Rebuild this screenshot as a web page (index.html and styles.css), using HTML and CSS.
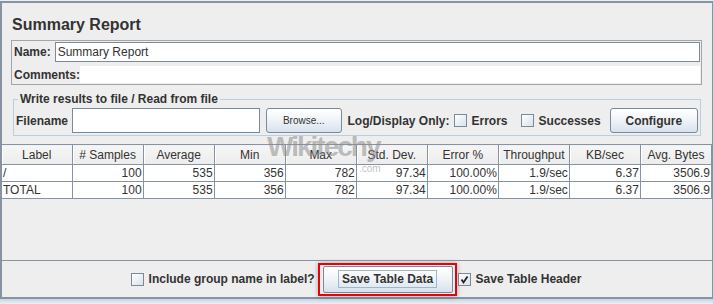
FILE: index.html
```html
<!DOCTYPE html>
<html lang="en">
<head>
    <meta charset="UTF-8">
    <meta name="viewport" content="width=device-width, initial-scale=1.0">
    <title>Summary Report</title>
    <link rel="stylesheet" href="styles.css">
</head>

<body>
    <div class="frame">
        <h1 class="title">Summary Report</h1>

        <div class="namebox">
            <div class="name-row">
                <label for="name">Name:</label>
                <input type="text" id="name" class="field" value="Summary Report">
            </div>
            <div class="comment-row">
                <label for="comments">Comments:</label>
                <div class="comment-field" id="comments"></div>
            </div>
        </div>

        <fieldset class="filebox">
            <legend>Write results to file / Read from file</legend>
            <div class="file-row">
                <label for="filename">Filename</label>
                <input type="text" id="filename" class="field filename">
                <button class="btn browse">Browse...</button>
                <span class="log-label">Log/Display Only:</span>
                <span class="check"></span>
                <span class="check-label">Errors</span>
                <span class="check second"></span>
                <span class="check-label">Successes</span>
                <button class="btn configure">Configure</button>
            </div>
        </fieldset>

        <div class="results">
            <table>
                <colgroup>
                    <col class="c-first">
                    <col><col><col><col><col><col><col><col><col>
                </colgroup>
                <thead>
                    <tr>
                        <th>Label</th>
                        <th># Samples</th>
                        <th>Average</th>
                        <th>Min</th>
                        <th>Max</th>
                        <th>Std. Dev.</th>
                        <th>Error %</th>
                        <th>Throughput</th>
                        <th>KB/sec</th>
                        <th>Avg. Bytes</th>
                    </tr>
                </thead>
                <tbody>
                    <tr>
                        <td class="lbl">/</td>
                        <td>100</td>
                        <td>535</td>
                        <td>356</td>
                        <td>782</td>
                        <td>97.34</td>
                        <td>100.00%</td>
                        <td>1.9/sec</td>
                        <td>6.37</td>
                        <td>3506.9</td>
                    </tr>
                    <tr>
                        <td class="lbl">TOTAL</td>
                        <td>100</td>
                        <td>535</td>
                        <td>356</td>
                        <td>782</td>
                        <td>97.34</td>
                        <td>100.00%</td>
                        <td>1.9/sec</td>
                        <td>6.37</td>
                        <td>3506.9</td>
                    </tr>
                </tbody>
            </table>
            <!-- site watermark over the grid -->
            <span class="watermark">Wikitechy<small>.com</small></span>
        </div>

        <div class="save-row">
            <span class="check"></span>
            <span class="check-label">Include group name in label?</span>
            <div class="highlight">
                <button class="btn save"><span class="focus">Save Table Data</span></button>
            </div>
            <span class="check checked">
                <svg width="11" height="11" viewBox="0 0 11 11"><path d="M2.5 5.5 L4.5 8.5 L8.5 2.5" fill="none" stroke="#222" stroke-width="1.8"/></svg>
            </span>
            <span class="check-label">Save Table Header</span>
        </div>
    </div>
    <div class="taskbar"></div>
</body>
</html>
```

FILE: styles.css
```css
* {
  box-sizing: border-box;
}

body {
  margin: 0;
  width: 713px;
  height: 304px;
  overflow: hidden;
  background-color: #eeeeee;
  font-family: "Liberation Sans", Arial, sans-serif;
  font-size: 12px;
  color: #333333;
}

.frame {
  margin-top: 1px;
  height: 298px;
  border: 2px solid #8593a2;
  border-right-width: 1px;
  display: flex;
  flex-direction: column;
  background-color: #eeeeee;
}

.title {
  margin: 0;
  padding: 12px 0 0 10px;
  font-size: 16px;
  line-height: 19px;
  font-weight: bold;
}

/* name / comments block */
.namebox {
  margin: 6px 10px 0 9px;
  border: 1px solid #a5a5a5;
  padding: 1px 1px 1px 2px;
}

.name-row,
.comment-row {
  display: flex;
  align-items: center;
}

.name-row {
  height: 20px;
}

.comment-row {
  height: 17px;
  margin-top: 4px;
}

label,
.log-label,
.check-label {
  font-weight: bold;
  white-space: nowrap;
}

.name-row label {
  margin-right: 4px;
}

.field {
  flex: 1;
  height: 20px;
  border: 1px solid #7b8a99;
  padding: 0 2px;
  margin: 0;
  font-family: inherit;
  font-size: 12px;
  color: #333333;
  background: #ffffff;
  outline: none;
}

.comment-field {
  flex: 1;
  height: 17px;
  background: #ffffff;
}

/* file box */
.filebox {
  margin: 7px 11px 0 11px;
  border: 1px solid #b8cfe5;
  padding: 0 2px 2px 2px;
  min-width: 0;
}

.filebox legend {
  margin-left: 2px;
  padding: 0 2px;
  font-weight: bold;
  line-height: 14px;
}

.file-row {
  margin-top: 2px;
  height: 25px;
  display: flex;
  align-items: center;
}

.file-row label {
  margin-right: 4px;
}

.filename {
  flex: none;
  width: 188px;
  height: 25px;
}

.btn {
  height: 25px;
  margin: 0;
  border: 1px solid #7b8a99;
  border-radius: 3px;
  background: linear-gradient(#ffffff, #f3f6f9 40%, #d7e2ed);
  font-family: inherit;
  color: #333333;
  padding: 0;
}

.browse {
  width: 76px;
  margin-left: 6px;
  font-size: 10px;
}

.log-label {
  margin-left: 6px;
  margin-right: 4px;
}

.check {
  flex: none;
  width: 13px;
  height: 13px;
  border: 1px solid #7b8a99;
  background: linear-gradient(135deg, #ffffff, #d8e2ec);
  display: inline-flex;
  align-items: center;
  justify-content: center;
}

.check + .check-label {
  margin-left: 5px;
}

.check.second {
  margin-left: 13px;
}

.configure {
  width: 89px;
  margin-left: 9px;
  font-size: 12px;
  font-weight: bold;
}

/* results grid */
.results {
  flex: 1;
  margin-top: 8px;
  border-bottom: 1px solid #8593a2;
  position: relative;
}

table {
  border-collapse: collapse;
  table-layout: fixed;
  width: 710px;
}

col {
  width: 71px;
}

col.c-first {
  width: 70px;
}

th {
  height: 20px;
  padding: 0;
  font-weight: normal;
  text-align: center;
  background: linear-gradient(#f6f6f6, #ececec);
  border-top: 1px solid #8593a2;
  border-bottom: 1px solid #8593a2;
  border-right: 1px solid #8593a2;
  box-shadow: inset 1px 0 #ffffff;
  white-space: nowrap;
  overflow: hidden;
}

td {
  height: 17px;
  padding: 0 1px;
  text-align: right;
  background: #ffffff;
  border: 1px solid #8593a2;
  border-left: none;
  white-space: nowrap;
}

td.lbl {
  text-align: left;
}

.watermark {
  position: absolute;
  left: 265px;
  top: -11px;
  font-size: 28px;
  line-height: 28px;
  font-weight: bold;
  letter-spacing: -2px;
  color: rgba(140, 140, 140, 0.55);
  pointer-events: none;
}

.watermark small {
  position: absolute;
  left: 92px;
  top: 31px;
  font-size: 10px;
  line-height: 10px;
  font-weight: normal;
  letter-spacing: 0;
}

/* bottom controls */
.save-row {
  height: 36px;
  display: flex;
  align-items: center;
  justify-content: center;
  padding-right: 2px;
}

.save-row .check-label + .highlight {
  margin-left: 3px;
}

.highlight {
  border: 2px solid #e8000c;
  padding: 1px 2px 1px 3px;
  box-shadow: 0 0 5px rgba(0, 0, 0, 0.3);
}

.save {
  width: 130px;
  height: 27px;
  border-radius: 2px;
  font-size: 12px;
  font-weight: bold;
  display: flex;
  align-items: center;
  justify-content: center;
}

.focus {
  border: 1px solid #a3b5c7;
  padding: 0 3px;
  line-height: 16px;
}

.checked {
  margin-left: 1px;
}

.taskbar {
  height: 5px;
  background: linear-gradient(#c9d5e1, #eaf0f6);
}
```
